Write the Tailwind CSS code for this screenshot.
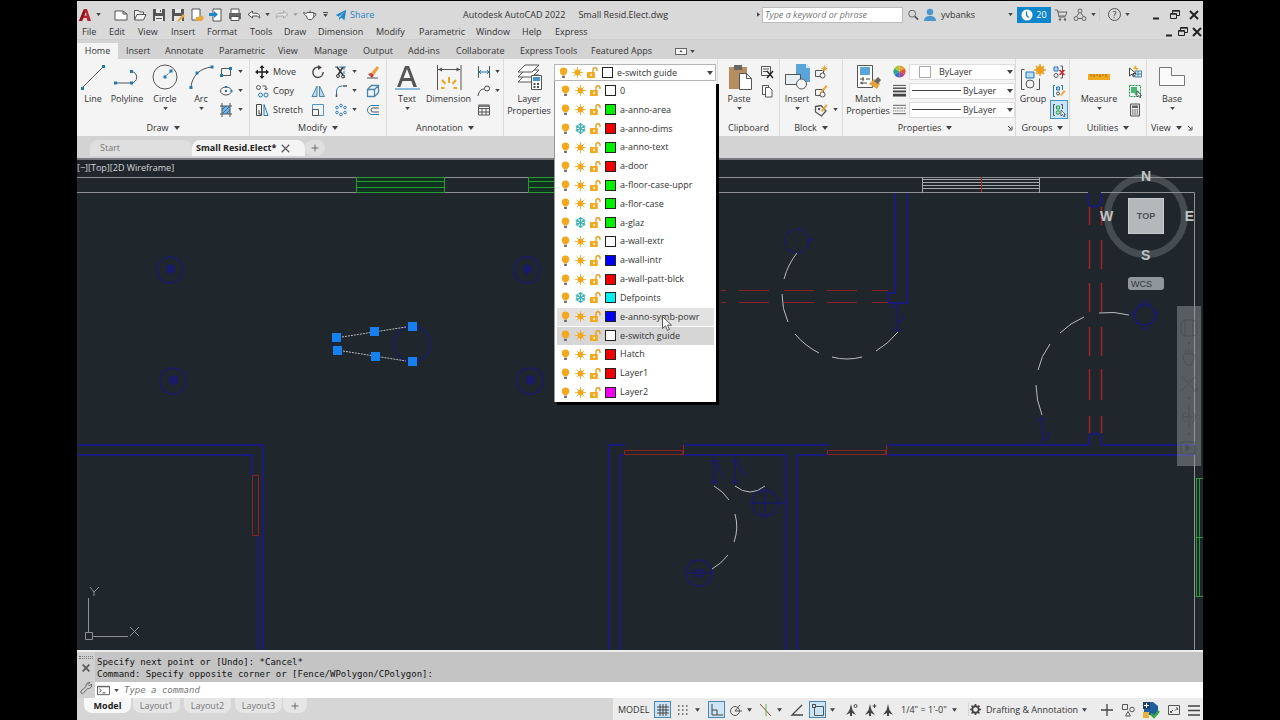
<!DOCTYPE html>
<html lang="en">
<head>
  <meta charset="UTF-8">
  <meta name="viewport" content="width=device-width, initial-scale=1.0">
  <title>Autodesk AutoCAD 2022 - Small Resid.Elect.dwg</title>
  <script src="https://cdn.jsdelivr.net/npm/@tailwindcss/browser@4"></script>
</head>

<body class="bg-black font-['Open_Sans','Noto_Sans',sans-serif] text-[9px] leading-3 text-[#333]">

  <!-- Icon sprite -->
  <svg class="hidden">
    <symbol id="caret" viewBox="0 0 6 4"><path d="M0 0h6L3 4z" fill="#444"/></symbol>
    <symbol id="logo" viewBox="0 0 14 14"><path d="M1 13 6 1h3l4 12h-3.500l-.8-3H5.500L4 13zM6.200 7.500h2.600L7.600 4z" fill="#b8242b"/><path d="M1 13 6 1l1.500 3L4 13z" fill="#8f1219"/></symbol>
    <symbol id="new" viewBox="0 0 14 14"><path d="M1 3h8l4 3v6H1zM9 3v3h4" fill="#fff" stroke="#555"/></symbol>
    <symbol id="open" viewBox="0 0 14 14"><path d="M1.500 12V2.500h4l1 1.500h4v2.500M1.500 12 4 6.500h9L10.500 12z" fill="#f4f4f4" stroke="#555"/></symbol>
    <symbol id="save" viewBox="0 0 14 14"><path d="M1 1h12v12H1z" fill="#555"/><path d="M4 1h6v4H4zM3 8h8v5H3z" fill="#e8e8e8"/><path d="M8 2h1v2H8zM4 10h6v1H4z" fill="#555"/></symbol>
    <symbol id="saveas" viewBox="0 0 14 14"><path d="M1 1h12v12H1z" fill="#555"/><path d="M4 1h6v4H4zM3 8h8v5H3z" fill="#e8e8e8"/><path d="M6 13 12 6l2 2-6 5.500z" fill="#e9a63a"/></symbol>
    <symbol id="web" viewBox="0 0 14 14"><path d="M2 1h8v11H2z" fill="#fff" stroke="#555"/><path d="M6 9h4l2 0v4H6z" fill="#e9a63a"/><circle cx="11" cy="10" r="2.500" fill="#e9a63a"/></symbol>
    <symbol id="mobile" viewBox="0 0 14 14"><path d="M4 1h8v12H4z" fill="#fff" stroke="#555"/><path d="M0 5h5V3l4 3.500L5 10V8H0z" fill="#1f86c8"/></symbol>
    <symbol id="print" viewBox="0 0 14 14"><path d="M3 1h8v5H3z" fill="#fff" stroke="#555"/><path d="M1 5h12v6H1z" fill="#666"/><path d="M3 8.500h8v4H3z" fill="#fff" stroke="#555"/></symbol>
    <symbol id="undo" viewBox="0 0 14 14"><path d="M1 6.500 5.500 3v2.200H9c4 0 4 4.500 3.500 5C12 8.500 11 8 9 8H5.500v2z" fill="#f4f4f4" stroke="#555"/></symbol>
    <symbol id="teapot" viewBox="0 0 14 14"><path d="M3.500 4.500h7c1 3 0 6-2 7H5.500c-1-.5-1.500-1.500-2-3.500C2 7.500 1 6 .5 4.500l3 1M7 4V2.500M10.500 5.500c3-1 3.500 1 0 4" fill="#f4f4f4" stroke="#555"/></symbol>
    <symbol id="plane" viewBox="0 0 14 14"><path d="M1 7 13 1l-2 12-4-3-2 3-.5-4z" fill="#1f86c8"/><path d="M4.500 9 11 3 5.500 10z" fill="#d9d9d9"/></symbol>
    <symbol id="search" viewBox="0 0 14 14"><g fill="none" stroke="#555"><circle cx="6" cy="5.500" r="4"/><path d="m9 8.500 4 4" stroke-width="2"/></g></symbol>
    <symbol id="user" viewBox="0 0 14 14"><circle cx="7" cy="4" r="3.200" fill="#4a97cf"/><path d="M1 13c0-4 3-5 6-5s6 1 6 5z" fill="#4a97cf"/></symbol>
    <symbol id="clock" viewBox="0 0 14 14"><circle cx="7" cy="7" r="6.500" fill="#fff"/><path d="M6.500 3v4.500L9 10" fill="none" stroke="#0d86cb" stroke-width="1.500"/></symbol>
    <symbol id="cart" viewBox="0 0 14 14"><path d="M1 2h2.500L5 9h6.500M4 4h9l-1.500 4H5" fill="none" stroke="#666"/><circle cx="6" cy="11.500" r="1.200" fill="#666"/><circle cx="11" cy="11.500" r="1.200" fill="#666"/></symbol>
    <symbol id="network" viewBox="0 0 14 14"><g fill="none" stroke="#666"><circle cx="7" cy="3" r="2"/><circle cx="3" cy="10.500" r="2"/><circle cx="11" cy="10.500" r="2"/><path d="M6 5 3.500 8.500M8 5l2.500 3.500M5 10.500h4"/></g></symbol>
    <symbol id="restore" viewBox="0 0 12 12"><path d="M3.500 4V1.500h7v5H8M1.500 4.500h6v5h-6z" fill="none" stroke="#222"/><path d="M3.500 2.200h7M1.500 5.200h6" stroke="#222"/></symbol>
    <symbol id="close" viewBox="0 0 12 12"><path d="m2 2 8 8M10 2l-8 8" stroke="#222" stroke-width="2"/></symbol>
    <symbol id="min" viewBox="0 0 12 12"><path d="M3 9.500h6" stroke="#222" stroke-width="2"/></symbol>

    <symbol id="line" viewBox="0 0 26 26"><path d="M2 24 24 2" stroke="#555"/><path d="M1 23h3v3H1zM22 1h3v3h-3z" fill="#1f78b8"/></symbol>
    <symbol id="polyline" viewBox="0 0 26 26"><path d="M2 19h15a5.500 5.500 0 0 0 0-11.500" fill="none" stroke="#555"/><path d="M0 17.500h3v3H0zM16 17.500h3v3h-3zM16 6h3v3h-3z" fill="#1f78b8"/></symbol>
    <symbol id="circle" viewBox="0 0 26 26"><circle cx="13" cy="13" r="12" fill="none" stroke="#555"/><path d="m13 13 6-6" stroke="#1f78b8" stroke-dasharray="2 1"/><path d="M11.500 11.500h3v3h-3zM17.500 5.500h3v3h-3z" fill="#1f78b8"/></symbol>
    <symbol id="arc" viewBox="0 0 26 26"><path d="M3 23C4 12 12 4 24 3" fill="none" stroke="#555"/><path d="M1.500 22h3v3h-3zM7.500 7.500h3v3h-3zM22.500 1.500h3v3h-3z" fill="#1f78b8"/></symbol>
    <symbol id="rect" viewBox="0 0 14 14"><path d="M2.500 3.500h9v7h-9z" fill="none" stroke="#555"/><path d="M1 9h3v3H1zM10 2h3v3h-3z" fill="#1f78b8"/></symbol>
    <symbol id="ellipse" viewBox="0 0 14 14"><ellipse cx="7" cy="7" rx="5.500" ry="4" fill="none" stroke="#555"/><path d="M6 6h2v2H6zM6 2h2v2H6zM11.500 6h2v2h-2z" fill="#1f78b8"/></symbol>
    <symbol id="hatch" viewBox="0 0 14 14"><path d="M3 3h8v8H3z" fill="#7ab4dc"/><path d="M3 0v14M11 0v14M1 3h12M1 11h12" stroke="#555"/><path d="m3 7 4-4M3 11l8-8M7 11l4-4" stroke="#1f78b8"/></symbol>
    <symbol id="move" viewBox="0 0 14 14"><path d="M7 2v10M2 7h10" stroke="#222" stroke-width="1.500"/><path d="m7 0 2.500 3h-5zM7 14l2.500-3h-5zM0 7l3-2.500v5zM14 7l-3-2.500v5z" fill="#222"/></symbol>
    <symbol id="copy" viewBox="0 0 14 14"><g fill="none" stroke="#555"><circle cx="3.500" cy="3.500" r="2"/><path d="M7.500 2H11v4M9.500 4.500 11 6l1.500-1.500"/></g><g fill="none" stroke="#1f78b8"><circle cx="5.500" cy="11" r="2"/><circle cx="11" cy="11" r="2"/></g></symbol>
    <symbol id="stretch" viewBox="0 0 14 14"><path d="M1.500 1.500h5v11h-5zM4 7v4h3" fill="none" stroke="#444"/><path d="M9 1.500 13 12.500H9z" fill="none" stroke="#1f78b8"/></symbol>
    <symbol id="rotate" viewBox="0 0 14 14"><path d="M8 2.200A5.200 5.200 0 1 0 12.200 7" fill="none" stroke="#444" stroke-width="1.300"/><path d="M7 0v5l4-2.500z" fill="#444"/></symbol>
    <symbol id="trim" viewBox="0 0 14 14"><path d="M1 2h12M10 2v11" stroke="#1f78b8" stroke-dasharray="3 1"/><path d="m3 2 6 8M9 2 4 10" stroke="#333" stroke-width="1.500"/><circle cx="4" cy="11" r="1.500" fill="none" stroke="#333"/><circle cx="9" cy="11.500" r="1.500" fill="none" stroke="#333"/></symbol>
    <symbol id="erase" viewBox="0 0 14 14"><path d="m5 8 6-7 2 2-5 7z" fill="#eda53a"/><path d="m2 9 3-1 3 2-2 3z" fill="#cf3b2f"/><path d="M1 13h11" stroke="#555"/></symbol>
    <symbol id="mirror" viewBox="0 0 14 14"><path d="M6 2v10.500H1zM8.500 2v10.500h5z" fill="#b8dcf2" stroke="#4a86ad"/></symbol>
    <symbol id="fillet" viewBox="0 0 14 14"><path d="M2.500 13V8c0-4 2-6 6-6" fill="none" stroke="#1f78b8"/><path d="M2.500 13v-3M9 2h4" stroke="#555" stroke-width="1.500"/></symbol>
    <symbol id="cube" viewBox="0 0 14 14"><path d="M1.500 5.500h7v7h-7zM1.500 5.500l4-4h7v7l-4 4M8.500 5.500l4-4" fill="none" stroke="#4a86ad" stroke-width="1.300"/></symbol>
    <symbol id="scale" viewBox="0 0 14 14"><path d="M1.500 1.500h11v11h-11z" fill="none" stroke="#4a97cf"/><path d="M1.500 6.500h6v6h-6z" fill="none" stroke="#555"/></symbol>
    <symbol id="array" viewBox="0 0 14 14"><g fill="none" stroke="#2d7eb8"><circle cx="7" cy="2.500" r="1.300"/><circle cx="11" cy="4.500" r="1.300"/><circle cx="11" cy="9.500" r="1.300"/><circle cx="7" cy="11.500" r="1.300"/><circle cx="3" cy="9.500" r="1.300"/><circle cx="3" cy="4.500" r="1.300"/></g></symbol>
    <symbol id="offset" viewBox="0 0 14 14"><path d="M13 2.500H6a4.500 4.500 0 0 0 0 9h7" fill="none" stroke="#2d7eb8"/><path d="M13 5H7a2 2 0 0 0 0 4h6" fill="none" stroke="#555"/></symbol>
    <symbol id="text" viewBox="0 0 26 26"><path d="M3 23 11 2h4l8 21h-3.500l-2.200-6H8.500l-2.200 6zM9.500 14h7L13 5z" fill="#555"/><path d="M1 25h25" stroke="#1f86c8"/></symbol>
    <symbol id="dimension" viewBox="0 0 26 26"><path d="M1.500 1v25M25 1v25M2 5.500h22" stroke="#555"/><path d="m2 5.500 4-2v4zM24.500 5.500l-4-2v4z" fill="#555"/><path d="m13 19 0-6M9.500 20 6 16M16.500 20l3.500-4M8.500 24H5M17.500 24H21" stroke="#eda81e" stroke-width="2"/></symbol>
    <symbol id="linear" viewBox="0 0 14 14"><path d="M1.500 1v12M12.500 1v12" stroke="#555"/><path d="M2 7h10M4 5 2 7l2 2M10 5l2 2-2 2" fill="none" stroke="#1f78b8"/></symbol>
    <symbol id="leader" viewBox="0 0 14 14"><path d="M1 12c1-5 3-7 6-7" fill="none" stroke="#444"/><circle cx="10" cy="4.500" r="2.500" fill="none" stroke="#444"/></symbol>
    <symbol id="table" viewBox="0 0 14 14"><path d="M1.500 2h11v10h-11zM1.500 5.500h11M1.500 9h11M5 5v7M9 5v7" fill="none" stroke="#555"/><path d="M1 2h12v2H1z" fill="#777"/></symbol>
    <symbol id="layers" viewBox="0 0 26 26"><g fill="#fff" stroke="#555"><path d="M2 18 9 11h14l-7 7z"/><path d="M2 13 9 6h14l-7 7z"/><path d="M2 8 9 1h14l-7 7z"/></g><path d="M15.500 11.500h10v14h-10z" fill="#fff" stroke="#555"/><path d="M17 13h7v4h-7z" fill="#4a97cf"/><path d="M17.500 19h2v2h-2zM21 19h2v2h-2zM17.500 22h2v2h-2zM21 22h2v2h-2z" fill="#555"/></symbol>
    <symbol id="bulb" viewBox="0 0 12 12"><circle cx="6" cy="4.500" r="4" fill="#f5a81c"/><path d="M4 7h4v2H4z" fill="#f5a81c"/><path d="M4.500 9.500h3V12h-3z" fill="#6d6d6d"/></symbol>
    <symbol id="sun" viewBox="0 0 12 12"><circle cx="6" cy="6" r="3.200" fill="#f5a81c"/><path d="M6 0v12M0 6h12M1.800 1.800l8.400 8.400M10.200 1.800l-8.400 8.400" stroke="#f5a81c" stroke-width=".9"/></symbol>
    <symbol id="snow" viewBox="0 0 12 12"><path d="M6 0v12M.8 3l10.400 6M11.200 3 .8 9M4 1l2 2 2-2M4 11l2-2 2 2M1 5.500 3.500 4.500 3 2M11 5.500 8.500 4.500 9 2M1 6.500l2.500 1L3 10M11 6.500l-2.500 1L9 10" fill="none" stroke="#3fb0b5" stroke-width="1.300"/></symbol>
    <symbol id="lock" viewBox="0 0 12 12"><path d="M0 5.500h8.500V12H0z" fill="#f5a81c"/><path d="M6.500 6V3a2.200 2.200 0 0 1 4.400 0v1.500" fill="none" stroke="#e89a14" stroke-width="1.400"/><path d="M3.500 7.500h2v2.500h-2z" fill="#fff3d6"/></symbol>
    <symbol id="paste" viewBox="0 0 26 26"><path d="M3 3h18v22H3z" fill="#b58d5e"/><path d="M8 1h8v5H8z" fill="#666"/><path d="M13.500 9.500h7l5 5v11h-12zM20.500 9.500v5h5" fill="#fff" stroke="#555"/></symbol>
    <symbol id="cut" viewBox="0 0 14 14"><path d="M1.500 1.500h9v9h-9zM3 4h6M3 6.500h4" fill="none" stroke="#555"/><path d="m7 6 6 7M13 6l-6 7" stroke="#222" stroke-width="1.400"/></symbol>
    <symbol id="copyclip" viewBox="0 0 14 14"><path d="M2.500 1.500h6v9h-6z" fill="#fff" stroke="#555"/><path d="M5.500 3.500h4l2.500 2.500v7H5.500z" fill="#fff" stroke="#555"/></symbol>
    <symbol id="insert" viewBox="0 0 26 26"><path d="M12 0h10l4 4v14H12z" fill="#5aa6da"/><path d="M22 0v4h4z" fill="#d5e9f6"/><path d="M1.500 10.500h15v10h-15z" fill="#e9eef1" stroke="#555"/><circle cx="17.500" cy="20" r="5" fill="#f4f4f4" stroke="#555"/></symbol>
    <symbol id="block" viewBox="0 0 14 14"><path d="M1.500 5.500h8v6h-8z" fill="none" stroke="#555"/><circle cx="8.500" cy="10.500" r="2.500" fill="#f4f4f4" stroke="#555"/><path d="M10.500.5v6M7.500 3.500h6M8.500 1.500l4 4M12.500 1.500l-4 4" stroke="#eda53a"/></symbol>
    <symbol id="blockedit" viewBox="0 0 14 14"><path d="M1.500 5.500h8v6h-8z" fill="none" stroke="#555"/><circle cx="8.500" cy="10.500" r="2.500" fill="#f4f4f4" stroke="#555"/><path d="m6 8 6-7 1.500 1.500L7.500 9z" fill="#eda53a"/></symbol>
    <symbol id="tag" viewBox="0 0 14 14"><path d="M1.500 3.500 7 2.500l5 5.500-4.500 5-6-4z" fill="none" stroke="#555" stroke-width="1.300"/><circle cx="5" cy="6" r="1.200" fill="#555"/><path d="m7 8 5-7 1.500 1.500L8.500 9z" fill="#eda53a"/></symbol>
    <symbol id="match" viewBox="0 0 26 26"><path d="M2.500 1.500h15v22h-15z" fill="#fff" stroke="#555"/><path d="M5 3h10v8H5z" fill="#5aa6da"/><path d="M5 15h4M11 15h4M5 19h7M8 13v4M7 17.500v3" stroke="#444"/><path d="m14 20 5-5 6 5-3 5z" fill="#e7a23a"/><path d="m19 17 4-4 3 3-3 4z" fill="#666"/></symbol>
    <symbol id="wheel" viewBox="0 0 14 14"><path d="M7 7V.5A6.500 6.500 0 0 1 12.600 3.700z" fill="#f0a030"/><path d="m7 7 5.600-3.300A6.500 6.500 0 0 1 12.600 10.300z" fill="#e3532f"/><path d="m7 7 5.600 3.300A6.500 6.500 0 0 1 7 13.500z" fill="#b0449a"/><path d="M7 7v6.500A6.500 6.500 0 0 1 1.400 10.300z" fill="#3a6fc4"/><path d="m7 7-5.600 3.300A6.500 6.500 0 0 1 1.400 3.700z" fill="#2ba884"/><path d="M7 7 1.400 3.700A6.500 6.500 0 0 1 7 .5z" fill="#a8c63a"/></symbol>
    <symbol id="weight" viewBox="0 0 14 14"><path d="M0 1.500h14" stroke="#444"/><path d="M0 4.500h14" stroke="#444" stroke-width="1.500"/><path d="M0 8h14" stroke="#444" stroke-width="2"/><path d="M0 12h14" stroke="#444" stroke-width="3"/></symbol>
    <symbol id="ltype" viewBox="0 0 14 14"><path d="M0 2.500h14M0 11.500h14" stroke="#555"/><path d="M0 5.500h14" stroke="#555" stroke-dasharray="3 1"/><path d="M0 8.500h14" stroke="#555" stroke-dasharray="1 1"/></symbol>
    <symbol id="group" viewBox="0 0 26 26"><path d="M4.500 5.500h-3v20h3M16.500 25.500h3v-11" fill="none" stroke="#555"/><path d="M6 8h8v6H6z" fill="#b8dcf2" stroke="#1f78b8"/><circle cx="10" cy="20" r="4" fill="none" stroke="#555"/><circle cx="20" cy="6" r="4" fill="#eda01e"/><path d="M20 0v12M14 6h12M16 2l8 8M24 2l-8 8" stroke="#eda01e" stroke-width="1.500"/></symbol>
    <symbol id="ungroup" viewBox="0 0 14 14"><path d="M2 2h4v4H2z" fill="#b8dcf2" stroke="#1f78b8"/><circle cx="4" cy="10.500" r="2" fill="none" stroke="#555"/><path d="M8.500 1h2v12h-2" fill="none" stroke="#555"/><path d="m7.500 5 5 5M12.500 5l-5 5" stroke="#d8232a" stroke-width="1.500"/></symbol>
    <symbol id="groupedit" viewBox="0 0 14 14"><path d="M3 1.500H1.500v11H3M9 1.500h1.500V6" fill="none" stroke="#1f78b8"/><path d="M4.500 3h3v3h-3z" fill="#b8dcf2" stroke="#1f78b8"/><circle cx="6" cy="9.500" r="1.500" fill="none" stroke="#555"/><path d="m8 11 4-5 1.500 1.500-4 4.500z" fill="#eda53a"/></symbol>
    <symbol id="groupsel" viewBox="0 0 14 14"><path d="M3 1.500H1.500v11H3M9 1.500h1.500V6" fill="none" stroke="#555"/><path d="M4.500 3h3v3h-3z" fill="#b9e8c8" stroke="#1f9a4c"/><circle cx="6" cy="9.500" r="1.800" fill="#b9e8c8" stroke="#1f9a4c"/><path d="M9 7v6l1.500-1.500L12 14l1-.5-1-2h1.500z" fill="#fff" stroke="#333" stroke-width=".7"/></symbol>
    <symbol id="ruler" viewBox="0 0 26 26"><path d="M2 10h22v6H2z" fill="#f0a81e"/><path d="M5 10v2M8 10v3M11 10v2M14 10v3M17 10v2M20 10v3" stroke="#9a6a10"/></symbol>
    <symbol id="qselect" viewBox="0 0 14 14"><path d="M7 6h6.500v6H7zM7 9h6.500M10 6v6" fill="#d5e9f6" stroke="#4a86ad"/><path d="M1.500 3v8L4 9l1.500 3 1-.5L5 8.500h3z" fill="#fff" stroke="#444"/><path d="M8 0 5 4h3L6 7l5-4H8.500z" fill="#f0a81e"/></symbol>
    <symbol id="selall" viewBox="0 0 14 14"><path d="M1.500 1.500h11v11h-11z" fill="none" stroke="#1f9a4c" stroke-dasharray="2 1"/><path d="M3 3h6v6H3z" fill="#49b874"/><circle cx="9" cy="9" r="2.500" fill="#49b874"/><path d="M9 7v6l1.500-1.500L12 14l1-.5-1-2h1.500z" fill="#fff" stroke="#333" stroke-width=".7"/></symbol>
    <symbol id="calc" viewBox="0 0 14 14"><path d="M2.500 1h9v12h-9z" fill="#e8e8e8" stroke="#555"/><path d="M4 2.500h6V5H4z" fill="#666"/><path d="M4 7h6M4 9h6M4 11h6" stroke="#555" stroke-dasharray="1.500 .8"/></symbol>
    <symbol id="base" viewBox="0 0 26 26"><path d="M.5 3.500h12v8h13v10H.5z" fill="#fafafa" stroke="#777"/></symbol>
    <symbol id="launcher" viewBox="0 0 6 6"><path d="M1 1l3 3M5 1.500V5H1.500" fill="none" stroke="#444"/></symbol>

    <symbol id="wrench" viewBox="0 0 14 14"><path d="m2 10 5-4.500C6.500 3 8.500 1 11 1.500L9 3.500 10.500 5l2-2C13.500 6 11 8 8.500 7.500L4 12.500C3 13.500 1 11.500 2 10z" fill="none" stroke="#666"/></symbol>
    <symbol id="prompt" viewBox="0 0 14 14"><path d="M.5 2.500h13v9H.5z" fill="#fff" stroke="#555"/><path d="M.5 3h13" stroke="#555"/><path d="m2.500 5 2 2-2 2M6 9.500h3" fill="none" stroke="#333"/></symbol>
    <symbol id="grid" viewBox="0 0 14 14"><path d="M4 1v12M7 1v12M10 1v12M1 4h12M1 7h12M1 10h12" stroke="#444"/></symbol>
    <symbol id="dots" viewBox="0 0 14 14"><path d="M2 3h10M2 7h10M2 11h10" stroke="#555" stroke-width="1.500" stroke-dasharray="1.500 2.500"/></symbol>
    <symbol id="ortho" viewBox="0 0 14 14"><path d="M2 1v11h11M2 7h5v5" fill="none" stroke="#444"/></symbol>
    <symbol id="polar" viewBox="0 0 14 14"><circle cx="6" cy="8" r="4.500" fill="none" stroke="#555"/><path d="M6 8h7M6 8l5-6" stroke="#555"/></symbol>
    <symbol id="iso" viewBox="0 0 14 14"><path d="m1 1 11 12" stroke="#8a4a3a"/><path d="M7 1v12" stroke="#6bb04a"/></symbol>
    <symbol id="angle" viewBox="0 0 14 14"><path d="M12 2 2 12h11" fill="none" stroke="#444" stroke-width="1.300"/></symbol>
    <symbol id="osnap" viewBox="0 0 14 14"><path d="M3.500 3.500h9v9h-9z" fill="none" stroke="#555"/><path d="M1.500 1.500h3v3h-3z" fill="#cce4f7" stroke="#444"/></symbol>
    <symbol id="anno" viewBox="0 0 14 14"><path d="M7 1 5.500 7 2 12l4-2v3h2v-3l4 2-3.500-5z" fill="#444"/></symbol>
    <symbol id="gear" viewBox="0 0 14 14"><circle cx="7" cy="7" r="3.500" fill="none" stroke="#444" stroke-width="2"/><path d="M7 1v2.500M7 10.500V13M1 7h2.500M10.500 7H13M2.800 2.800l1.700 1.700M9.500 9.500l1.700 1.700M11.200 2.800 9.500 4.500M4.500 9.500l-1.700 1.700" stroke="#444" stroke-width="1.700"/></symbol>
    <symbol id="plus" viewBox="0 0 14 14"><path d="M7 1v12M1 7h12" stroke="#444" stroke-width="1.300"/></symbol>
    <symbol id="shapes" viewBox="0 0 14 14"><g fill="none" stroke="#555"><path d="M1.500 1.500h5v5h-5zM7 8.500 9.500 13h-5z"/><circle cx="11" cy="6.500" r="2.300"/></g></symbol>
    <symbol id="graphics" viewBox="0 0 18 18"><path d="M2 1h9l5 4v9H2z" fill="#1f5f9e"/><path d="M1 1h7v7H1z" fill="#1a3f6c"/><path d="M4.500 2v5M2 4.500h5" stroke="#fff"/><path d="M1 11h6v6H1z" fill="#e9b13a"/><path d="m9 13 3 3 5-6" fill="none" stroke="#3aa843" stroke-width="2.500"/></symbol>
    <symbol id="clean" viewBox="0 0 14 14"><path d="M1.500 2.500h11v9h-11zM9 5h1.500v2M3.500 8v1.500H5M10 5.500 8 7.500M4 9l2-2" fill="none" stroke="#555"/></symbol>
    <symbol id="menu" viewBox="0 0 14 14"><path d="M1 3h12M1 7.500h12M1 12h12" stroke="#444" stroke-width="1.300"/></symbol>
  </svg>

  <div class="mx-[77px] flex min-h-screen flex-col bg-[#d6d6d6]">

    <!-- Title bar -->
    <header class="flex h-6 items-center border-t border-black bg-[#d9d9d9] pt-1">
      <div class="flex w-[386px] items-center">
        <button class="flex w-[34px] items-center gap-1 pl-px" aria-label="Application menu"><svg class="size-[14px]"><use href="#logo"/></svg><svg class="h-[3px] w-[5px]"><use href="#caret"/></svg></button>
        <button class="flex w-[19px] justify-center" aria-label="New"><svg class="size-[14px]"><use href="#new"/></svg></button>
        <button class="flex w-[19px] justify-center" aria-label="Open"><svg class="size-[14px]"><use href="#open"/></svg></button>
        <button class="flex w-[19px] justify-center" aria-label="Save"><svg class="size-[14px]"><use href="#save"/></svg></button>
        <button class="flex w-[19px] justify-center" aria-label="Save as"><svg class="size-[14px]"><use href="#saveas"/></svg></button>
        <button class="flex w-[19px] justify-center" aria-label="Open from web"><svg class="size-[14px]"><use href="#web"/></svg></button>
        <button class="flex w-[19px] justify-center" aria-label="Save to web"><svg class="size-[14px]"><use href="#mobile"/></svg></button>
        <button class="flex w-[19px] justify-center" aria-label="Plot"><svg class="size-[14px]"><use href="#print"/></svg></button>
        <button class="flex w-7 items-center gap-1 pl-[3px]" aria-label="Undo"><svg class="size-[14px]"><use href="#undo"/></svg><svg class="h-[3px] w-[5px]"><use href="#caret"/></svg></button>
        <button class="flex w-7 items-center gap-1 pl-[3px] opacity-35" aria-label="Redo"><svg class="size-[14px] -scale-x-100"><use href="#undo"/></svg><svg class="h-[3px] w-[5px]"><use href="#caret"/></svg></button>
        <button class="flex w-[19px] justify-center" aria-label="Render"><svg class="size-[14px]"><use href="#teapot"/></svg></button>
        <button class="flex w-3 flex-col items-center gap-px" aria-label="Customize"><span class="h-px w-[5px] bg-[#444]"></span><svg class="h-[3px] w-[5px]"><use href="#caret"/></svg></button>
        <button class="ml-1 flex items-center gap-[3px] text-[#1f86c8]"><svg class="size-3"><use href="#plane"/></svg>Share</button>
      </div>
      <h1 class="flex flex-1 gap-[13px]"><span>Autodesk AutoCAD 2022</span><span>Small Resid.Elect.dwg</span></h1>
      <div class="flex w-[447px] items-center">
        <svg class="h-[3px] w-[5px] -rotate-90"><use href="#caret"/></svg>
        <input type="text" aria-label="Search help" placeholder="Type a keyword or phrase" class="ml-px h-4 w-[141px] border border-[#bbb] bg-white px-[2px] italic placeholder:text-[#777]">
        <button class="flex w-5 justify-center" aria-label="Search"><svg class="size-3"><use href="#search"/></svg></button>
        <button class="flex flex-1 items-center gap-1"><svg class="size-[14px]"><use href="#user"/></svg>yvbanks<svg class="mr-1 ml-auto h-[3px] w-[5px]"><use href="#caret"/></svg></button>
        <button class="flex h-4 w-[34px] items-center justify-center gap-[3px] bg-[#0d86cb] text-white"><svg class="size-3"><use href="#clock"/></svg>20</button>
        <button class="flex w-5 justify-center" aria-label="App store"><svg class="size-[14px]"><use href="#cart"/></svg></button>
        <button class="flex w-7 items-center gap-1 pl-[2px]" aria-label="Connect"><svg class="size-[14px]"><use href="#network"/></svg><svg class="h-[3px] w-[5px]"><use href="#caret"/></svg></button>
        <button class="flex w-[34px] items-center gap-1 border-l border-[#ccc] pl-2" aria-label="Help"><span class="flex size-[13px] items-center justify-center rounded-full border border-[#555]">?</span><svg class="h-[3px] w-[5px]"><use href="#caret"/></svg></button>
        <button class="ml-[14px] flex w-[18px] justify-center" aria-label="Minimize"><svg class="size-3"><use href="#min"/></svg></button>
        <button class="flex w-5 justify-center" aria-label="Restore"><svg class="size-3"><use href="#restore"/></svg></button>
        <button class="flex w-[18px] justify-center" aria-label="Close"><svg class="size-3"><use href="#close"/></svg></button>
      </div>
    </header>

    <!-- Menu bar -->
    <nav class="flex h-4 items-center border-b border-[#cdcdcd] bg-[#d9d9d9] pl-[5px]">
      <div class="grid grid-cols-[27px_29px_33px_36px_43px_34px_34px_58px_43px_57px_46px_33px_32px]">
        <a href="#">File</a><a href="#">Edit</a><a href="#">View</a><a href="#">Insert</a><a href="#">Format</a><a href="#">Tools</a><a href="#">Draw</a><a href="#">Dimension</a><a href="#">Modify</a><a href="#">Parametric</a><a href="#">Window</a><a href="#">Help</a><a href="#">Express</a>
      </div>
      <div class="ml-auto flex gap-[2px]">
        <button aria-label="Minimize drawing"><svg class="size-3"><use href="#min"/></svg></button>
        <button aria-label="Restore drawing"><svg class="size-3"><use href="#restore"/></svg></button>
        <button aria-label="Close drawing"><svg class="size-3"><use href="#close"/></svg></button>
      </div>
    </nav>

    <!-- Ribbon tabs -->
    <nav class="flex h-[19px] items-end bg-[#d3d3d3]">
      <a href="#" class="flex h-4 w-[41px] items-center justify-center bg-[#f4f4f4]">Home</a>
      <div class="grid h-4 grid-cols-[39px_54px_59px_36px_49px_45px_48px_64px_71px_84px] items-center pl-2">
        <a href="#">Insert</a><a href="#">Annotate</a><a href="#">Parametric</a><a href="#">View</a><a href="#">Manage</a><a href="#">Output</a><a href="#">Add-ins</a><a href="#">Collaborate</a><a href="#">Express Tools</a><a href="#">Featured Apps</a>
      </div>
      <button class="flex h-4 items-center gap-[3px]" aria-label="Minimize ribbon"><span class="flex h-[7px] w-3 items-center justify-center border border-[#666] bg-[#f4f4f4]"><svg class="h-[2px] w-1 rotate-180"><use href="#caret"/></svg></span><svg class="h-[3px] w-[5px]"><use href="#caret"/></svg></button>
    </nav>

    <!-- Ribbon -->
    <section class="flex h-[77px] bg-[#f4f4f4] text-center">

      <div class="flex w-[173px] flex-col border-r border-[#dcdcdc] pt-[3px]">
        <div class="flex h-[57px]">
          <button class="flex w-8 flex-col items-center"><svg class="mt-[2px] mb-[3px] size-[26px]"><use href="#line"/></svg>Line</button>
          <button class="flex w-9 flex-col items-center"><svg class="mt-[2px] mb-[3px] size-[26px]"><use href="#polyline"/></svg>Polyline</button>
          <button class="flex w-10 flex-col items-center"><svg class="mt-[2px] mb-[3px] size-[26px]"><use href="#circle"/></svg>Circle<svg class="mt-[2px] h-[3px] w-[5px]"><use href="#caret"/></svg></button>
          <button class="flex w-8 flex-col items-center"><svg class="mt-[2px] mb-[3px] size-[26px]"><use href="#arc"/></svg>Arc<svg class="mt-[2px] h-[3px] w-[5px]"><use href="#caret"/></svg></button>
          <div class="grid grid-rows-3 pl-[2px]">
            <button class="flex items-center gap-[5px]" aria-label="Rectangle"><svg class="size-[14px]"><use href="#rect"/></svg><svg class="h-[3px] w-[5px]"><use href="#caret"/></svg></button>
            <button class="flex items-center gap-[5px]" aria-label="Ellipse"><svg class="size-[14px]"><use href="#ellipse"/></svg><svg class="h-[3px] w-[5px]"><use href="#caret"/></svg></button>
            <button class="flex items-center gap-[5px]" aria-label="Hatch"><svg class="size-[14px]"><use href="#hatch"/></svg><svg class="h-[3px] w-[5px]"><use href="#caret"/></svg></button>
          </div>
        </div>
        <button class="flex flex-1 items-center justify-center gap-[5px]">Draw<svg class="h-1 w-[6px]"><use href="#caret"/></svg></button>
      </div>

      <div class="flex w-[137px] flex-col border-r border-[#dcdcdc] pt-[3px]">
        <div class="grid h-[57px] grid-cols-[56px_23px_32px_20px] grid-rows-3 pl-[5px]">
          <button class="flex items-center gap-1"><svg class="size-[14px]"><use href="#move"/></svg>Move</button>
          <button class="flex items-center" aria-label="Rotate"><svg class="size-[14px]"><use href="#rotate"/></svg></button>
          <button class="flex items-center gap-1" aria-label="Trim"><svg class="size-[14px]"><use href="#trim"/></svg><svg class="h-[3px] w-[5px]"><use href="#caret"/></svg></button>
          <button class="flex items-center" aria-label="Erase"><svg class="size-[14px]"><use href="#erase"/></svg></button>
          <button class="flex items-center gap-1"><svg class="size-[14px]"><use href="#copy"/></svg>Copy</button>
          <button class="flex items-center" aria-label="Mirror"><svg class="size-[14px]"><use href="#mirror"/></svg></button>
          <button class="flex items-center gap-1" aria-label="Fillet"><svg class="size-[14px]"><use href="#fillet"/></svg><svg class="h-[3px] w-[5px]"><use href="#caret"/></svg></button>
          <button class="flex items-center" aria-label="Explode"><svg class="size-[14px]"><use href="#cube"/></svg></button>
          <button class="flex items-center gap-1"><svg class="size-[14px]"><use href="#stretch"/></svg>Stretch</button>
          <button class="flex items-center" aria-label="Scale"><svg class="size-[14px]"><use href="#scale"/></svg></button>
          <button class="flex items-center gap-1" aria-label="Array"><svg class="size-[14px]"><use href="#array"/></svg><svg class="h-[3px] w-[5px]"><use href="#caret"/></svg></button>
          <button class="flex items-center" aria-label="Offset"><svg class="size-[14px]"><use href="#offset"/></svg></button>
        </div>
        <button class="flex flex-1 items-center justify-center gap-[5px]">Modify<svg class="h-1 w-[6px]"><use href="#caret"/></svg></button>
      </div>

      <div class="flex w-[117px] flex-col border-r border-[#dcdcdc] pt-[3px]">
        <div class="flex h-[57px] pl-1">
          <button class="flex w-8 flex-col items-center"><svg class="mt-[2px] mb-[3px] size-[26px]"><use href="#text"/></svg>Text<svg class="mt-[2px] h-[3px] w-[5px]"><use href="#caret"/></svg></button>
          <button class="flex w-[51px] flex-col items-center"><svg class="mt-[2px] mb-[3px] size-[26px]"><use href="#dimension"/></svg>Dimension</button>
          <div class="grid grid-rows-3 pl-[3px]">
            <button class="flex items-center gap-1" aria-label="Linear"><svg class="size-[14px]"><use href="#linear"/></svg><svg class="h-[3px] w-[5px]"><use href="#caret"/></svg></button>
            <button class="flex items-center gap-1" aria-label="Leader"><svg class="size-[14px]"><use href="#leader"/></svg><svg class="h-[3px] w-[5px]"><use href="#caret"/></svg></button>
            <button class="flex items-center" aria-label="Table"><svg class="size-[14px]"><use href="#table"/></svg></button>
          </div>
        </div>
        <button class="flex flex-1 items-center justify-center gap-[5px]">Annotation<svg class="h-1 w-[6px]"><use href="#caret"/></svg></button>
      </div>

      <!-- Layers panel with its open layer list -->
      <div class="flex w-[214px] border-r border-[#dcdcdc] pt-[3px]">
        <button class="flex w-[50px] flex-col items-center"><svg class="mt-[2px] mb-[3px] size-[26px]"><use href="#layers"/></svg>Layer Properties</button>
        <div class="relative mt-[2px] h-[17px] w-[162px]">
          <button id="layerCombo" aria-haspopup="listbox" aria-expanded="true" class="flex h-full w-full items-center border border-[#b5b5b5] bg-white pr-[2px] pl-[3px]">
            <svg class="mr-[3px] size-[11px]"><use href="#bulb"/></svg>
            <svg class="mr-1 size-[11px]"><use href="#sun"/></svg>
            <svg class="mr-1 size-[11px]"><use href="#lock"/></svg>
            <span class="mr-1 size-[11px] border border-[#222] bg-white"></span>
            e-switch guide
            <svg class="ml-auto h-1 w-[6px]"><use href="#caret"/></svg>
          </button>
          <ul id="layerList" role="listbox" aria-label="Layers" class="absolute top-full left-0 z-20 grid h-[321px] w-full auto-rows-fr border-l border-[#999] bg-white px-[2px] pt-px text-left shadow-[3px_3px_0_#000]"></ul>
          <svg class="absolute top-[252px] left-[108px] z-30 h-[15px] w-[10px]" viewBox="0 0 10 15"><path d="M.5.500v12l3-2.700 2 4.500 2-.9-2-4.300h4z" fill="#fff" stroke="#555"/></svg>
        </div>
      </div>

      <div class="flex w-[62px] flex-col border-r border-[#dcdcdc] pt-[3px]">
        <div class="flex h-[57px]">
          <button class="flex w-[42px] flex-col items-center"><svg class="mt-[2px] mb-[3px] size-[26px]"><use href="#paste"/></svg>Paste<svg class="mt-[2px] h-[3px] w-[5px]"><use href="#caret"/></svg></button>
          <div class="grid grid-rows-3">
            <button class="flex items-center" aria-label="Cut"><svg class="size-[14px]"><use href="#cut"/></svg></button>
            <button class="flex items-center" aria-label="Copy clip"><svg class="size-[14px]"><use href="#copyclip"/></svg></button>
          </div>
        </div>
        <span class="flex flex-1 items-center justify-center">Clipboard</span>
      </div>

      <div class="flex w-[63px] flex-col border-r border-[#dcdcdc] pt-[3px]">
        <div class="flex h-[57px]">
          <button class="flex w-[34px] flex-col items-center"><svg class="mt-[2px] mb-[3px] size-[26px]"><use href="#insert"/></svg>Insert<svg class="mt-[2px] h-[3px] w-[5px]"><use href="#caret"/></svg></button>
          <div class="grid grid-rows-3">
            <button class="flex items-center" aria-label="Create block"><svg class="size-[14px]"><use href="#block"/></svg></button>
            <button class="flex items-center" aria-label="Edit block"><svg class="size-[14px]"><use href="#blockedit"/></svg></button>
            <button class="flex items-center gap-[5px]" aria-label="Attributes"><svg class="size-[14px]"><use href="#tag"/></svg><svg class="h-[3px] w-[5px]"><use href="#caret"/></svg></button>
          </div>
        </div>
        <button class="flex flex-1 items-center justify-center gap-[5px]">Block<svg class="h-1 w-[6px]"><use href="#caret"/></svg></button>
      </div>

      <div class="flex w-[173px] flex-col border-r border-[#dcdcdc] pt-[3px]">
        <div class="flex h-[57px]">
          <button class="flex w-[50px] flex-col items-center"><svg class="mt-[2px] mb-[3px] size-[26px]"><use href="#match"/></svg>Match Properties</button>
          <div class="grid flex-1 grid-cols-[16px_1fr] grid-rows-3 items-center">
            <svg class="size-[13px]"><use href="#wheel"/></svg>
            <div class="relative">
              <select aria-label="Object color" class="h-4 w-full appearance-none border border-[#ddd] bg-white pl-[29px]"><option>ByLayer</option></select>
              <span class="absolute top-[2px] left-[10px] size-3 border border-[#aaa] bg-white"></span>
              <svg class="absolute top-[6px] right-[2px] h-1 w-[6px]"><use href="#caret"/></svg>
            </div>
            <svg class="size-[13px]"><use href="#weight"/></svg>
            <div class="relative">
              <select aria-label="Lineweight" class="h-4 w-full appearance-none border border-[#ddd] bg-white pl-[53px]"><option>ByLayer</option></select>
              <span class="absolute top-[7px] left-[3px] h-px w-[49px] bg-[#444]"></span>
              <svg class="absolute top-[6px] right-[2px] h-1 w-[6px]"><use href="#caret"/></svg>
            </div>
            <svg class="size-[13px]"><use href="#ltype"/></svg>
            <div class="relative">
              <select aria-label="Linetype" class="h-4 w-full appearance-none border border-[#ddd] bg-white pl-[53px]"><option>ByLayer</option></select>
              <span class="absolute top-[7px] left-[3px] h-px w-[49px] bg-[#444]"></span>
              <svg class="absolute top-[6px] right-[2px] h-1 w-[6px]"><use href="#caret"/></svg>
            </div>
          </div>
        </div>
        <div class="flex flex-1 items-center">
          <button class="flex flex-1 items-center justify-center gap-[5px]">Properties<svg class="h-1 w-[6px]"><use href="#caret"/></svg></button>
          <svg class="mr-[2px] size-[6px]"><use href="#launcher"/></svg>
        </div>
      </div>

      <div class="flex w-[54px] flex-col border-r border-[#dcdcdc] pt-[3px]">
        <div class="flex h-[57px]">
          <button class="flex w-[34px] flex-col items-center"><svg class="mt-[2px] mb-[3px] size-[26px]"><use href="#group"/></svg>Group</button>
          <div class="grid grid-rows-3">
            <button class="flex items-center px-[2px]" aria-label="Ungroup"><svg class="size-[14px]"><use href="#ungroup"/></svg></button>
            <button class="flex items-center px-[2px]" aria-label="Group edit"><svg class="size-[14px]"><use href="#groupedit"/></svg></button>
            <button class="flex items-center border border-[#3c95d1] bg-[#cce4f7] px-px" aria-label="Group selection"><svg class="size-[14px]"><use href="#groupsel"/></svg></button>
          </div>
        </div>
        <button class="flex flex-1 items-center justify-center gap-[5px]">Groups<svg class="h-1 w-[6px]"><use href="#caret"/></svg></button>
      </div>

      <div class="flex w-[77px] flex-col border-r border-[#dcdcdc] pt-[3px]">
        <div class="flex h-[57px]">
          <button class="flex w-[58px] flex-col items-center"><svg class="mt-[2px] mb-[3px] size-[26px]"><use href="#ruler"/></svg>Measure<svg class="mt-[2px] h-[3px] w-[5px]"><use href="#caret"/></svg></button>
          <div class="grid grid-rows-3">
            <button class="flex items-center" aria-label="Quick select"><svg class="size-[14px]"><use href="#qselect"/></svg></button>
            <button class="flex items-center" aria-label="Select all"><svg class="size-[14px]"><use href="#selall"/></svg></button>
            <button class="flex items-center" aria-label="Calculator"><svg class="size-[14px]"><use href="#calc"/></svg></button>
          </div>
        </div>
        <button class="flex flex-1 items-center justify-center gap-[5px]">Utilities<svg class="h-1 w-[6px]"><use href="#caret"/></svg></button>
      </div>

      <div class="flex flex-1 flex-col pt-[3px]">
        <div class="flex h-[57px]">
          <button class="flex w-[50px] flex-col items-center"><svg class="mt-[2px] mb-[3px] size-[26px]"><use href="#base"/></svg>Base<svg class="mt-[2px] h-[3px] w-[5px]"><use href="#caret"/></svg></button>
        </div>
        <button class="flex flex-1 items-center gap-[5px] pl-1">View<svg class="h-1 w-[6px]"><use href="#caret"/></svg><svg class="size-[6px]"><use href="#launcher"/></svg></button>
      </div>
    </section>

    <!-- Drawing tabs -->
    <nav class="flex h-6 items-start border-b-2 border-[#77777c] bg-[#d3d3d3] pt-1">
      <a href="#" class="ml-[13px] flex h-4 w-[102px] items-center rounded-t-lg bg-[#dfdfdf] pl-[10px] text-[#777]">Start</a>
      <a href="#" class="flex h-4 w-[113px] items-center gap-[5px] rounded-t-lg bg-[#f4f4f4] pl-1 font-bold whitespace-nowrap text-[#222]">Small Resid.Elect*<svg class="size-[9px] shrink-0" viewBox="0 0 12 12"><path d="m1 1 10 10M11 1 1 11" stroke="#555" stroke-width="1.500"/></svg></a>
      <button class="flex h-4 w-5 items-center justify-center rounded-lg bg-[#dfdfdf]" aria-label="New drawing"><svg class="size-2"><use href="#plus"/></svg></button>
    </nav>

    <!-- Drawing area -->
    <main class="relative flex-1 bg-[#1f272c]">
      <svg class="absolute inset-0 h-full w-full" viewBox="77 160 1126 490" preserveAspectRatio="xMinYMin slice" fill="none">
        <!-- exterior walls and windows -->
        <path d="M77 177.500H1203M77 192.500H1088M1101 192.500H1194.500V445M1194.500 455V650" stroke="#8d8f92"/>
        <path d="M356.500 177.500h88v15h-88zM528.500 177.500h40v15h-40z" fill="#0f3320" stroke="#2b9a35"/>
        <path d="M357 181.500h88M357 187.500h88M529 181.500h40M529 187.500h40M1195.500 478.500h8M1195.500 596.500h8M1195.500 537.500h8M1196.500 478v118M1199.500 478v118" stroke="#2b9a35"/>
        <path d="M922.500 177v16M1039.500 177v16M922 179.500h117M922 182.500h117M922 185.500h117M922 188.500h117" stroke="#a5a8aa"/>
        <path d="M981.500 177v15" stroke="#b02428"/>

        <!-- interior walls -->
        <g stroke="#1a1b7c" stroke-width="2">
          <path d="M77 445h186V650M77 455h175v20M258 535V650"/>
          <path d="M625 445h-16V650M620 650V455h4M684 445h145M684 455h102V650M797 650V455h30M887 445h202M1101 445h93M887 455h307"/>
          <path d="M895 193v100h-7v10M907 193v110h-19"/>
          <path d="M1088 193v10c3 5 10 5 13 0v-10M1089 445v-8c3-5 9-5 12 0v8"/>
        </g>

        <!-- doors -->
        <g stroke="#8e1f23">
          <path d="M252.500 475.500h6v60h-6zM624.500 450.500h58v4h-58zM683.500 445v10M827.500 450.500h58v4h-58zM886.500 445v10"/>
          <path d="M721 290.500h5M739 290.500h30M784 290.500h30M827 290.500h30M872 290.500h16M721 302.500h5M739 302.500h30M784 302.500h30M827 302.500h30M872 302.500h16"/>
        </g>
        <path d="M1089.500 207v18M1089.500 240v29M1089.500 283v29M1089.500 327v29M1089.500 369v31M1089.500 416v17M1101.500 207v18M1101.500 240v29M1101.500 283v29M1101.500 327v29M1101.500 369v31M1101.500 416v17" stroke="#a02226" stroke-width="1.500"/>

        <!-- electrical symbols -->
        <g stroke="#1a1b6c" stroke-width="1.500">
          <circle cx="170" cy="270" r="13"/><circle cx="527" cy="270" r="13"/><circle cx="173" cy="381" r="13"/><circle cx="530" cy="381" r="13"/>
          <path d="M167 266h7v6h-7zM170 264v12M524 266h7v6h-7zM527 264v12M170 377h7v6h-7zM173 375v12M527 377h7v6h-7zM530 375v12" fill="#1a1b6c"/>
          <circle cx="412" cy="344" r="18"/><path d="M332 343c0 5 3 6 7 6"/>
          <circle cx="797" cy="241" r="12" stroke-dasharray="8 3"/><path d="m807 241 6-2"/>
          <path d="m1145 300 14 15-14 15-14-15z" stroke-dasharray="9 3"/><circle cx="1145" cy="315" r="10"/>
          <path d="M897.500 303v28M893 330h9M889 309c6-6 10-3 8 4M897 323c8-3 8-7 5-8M1042.500 417v28M1036 422c5-6 8-3 6 4M1042 440c8 0 8-6 5-8"/>
          <path d="M714 457v28M711 482h7M735 457v28M731 482h8M710 461h9M731 461h9M716 463l8 16M737 463l9 14"/>
          <circle cx="765" cy="503" r="13"/><path d="M750 503h36M765 490v28"/><circle cx="699" cy="573" r="13"/><path d="M695 570h8v6h-8zM688 573h26"/>
        </g>

        <!-- switch wiring arcs -->
        <g stroke="#b9bcbe">
          <path d="M797 253q-9 11-13 26M782 294q0 15 6 28M795 334q10 12 24 19M832 357q15 4 30 0M876 351q12-7 22-19"/>
          <path d="M1042 415q-6-15-6-30M1038 370q3-14 12-26M1060 333q10-10 24-16M1099 313q15-2 30 2"/>
          <path d="M714 486q9 5 15 14M735 514q4 14-1 28M728 555q-7 9-16 14M735 486q15 12 30 0"/>
          <path d="m342 337 64-10M343 351l63 10" stroke-dasharray="2 1"/>
        </g>
        <path d="M332 333h9v9h-9zM370 327h9v9h-9zM408 322h9v9h-9zM333 346h9v9h-9zM371 352h9v9h-9zM408 357h9v9h-9z" fill="#1681ee"/>

        <!-- UCS icon -->
        <path d="M88.500 598v34M93 636.500h35M85.500 632.500h7v7h-7zM90 587l4 5 5-5M94 592v4M130 627l9 9M139 627l-9 9" stroke="#8b9194"/>
      </svg>

      <span class="absolute top-[2px] left-0 text-[#d5d8da]">[−][Top][2D Wireframe]</span>

      <!-- View cube -->
      <div class="absolute top-[14px] right-[15px] size-[84px] font-['Liberation_Sans',sans-serif] text-sm font-bold text-[#c0c4c6]">
        <div class="absolute inset-0 rounded-full border-[7px] border-[#8c9499]/35"></div>
        <span class="absolute -top-1 left-[37px] leading-3">N</span>
        <span class="absolute top-9 -left-1 leading-3">W</span>
        <span class="absolute top-9 right-[-6px] leading-3">E</span>
        <span class="absolute top-[75px] left-[37px] leading-3">S</span>
        <button class="absolute top-6 left-6 size-9 border border-[#c5cbcd] bg-[#b3b9ba] text-[9px] text-[#4b5255]">TOP</button>
      </div>
      <button class="absolute top-[117px] right-[39px] h-[13px] w-9 rounded-[3px] bg-[#8f969c] pl-[3px] text-left font-['Liberation_Sans',sans-serif] text-[9px] text-[#30383c]">WCS</button>

      <!-- Navigation bar -->
      <div class="absolute top-[146px] right-[2px] flex h-40 w-6 flex-col items-center justify-between bg-[#9aa2a5]/45 py-3">
        <svg class="h-[136px] w-5 opacity-50" viewBox="0 0 20 136" fill="none" stroke="#3f474b"><path d="M5 2h10l3 4v9l-3 3H5l-3-3V6zM6 2v16M14 2v16M7 36v-5M10 36v-6M13 36v-4M5 36h10v6l-3 5H8l-4-6zM2 58l15 15M17 58 2 73M14 73h4v-4M10 88v22M3 99h14M6 94l-3 5 3 5M14 94l3 5-3 5M2 124h14v12H2z"/><path d="m7 127 5 3-5 3z" fill="#3f474b"/><path d="M9 25h2M9 80h2M9 116h2" stroke-width="2"/></svg>
      </div>
    </main>

    <!-- Command line -->
    <section class="flex h-12 border-t-2 border-[#eee] bg-[#c4c4c4] font-['DejaVu_Sans_Mono','Liberation_Mono',monospace] text-[#111]">
      <div class="flex w-[18px] flex-col items-center bg-[#d0d0d0] pt-1">
        <span class="h-[3px] w-[14px] border-y border-dotted border-[#777]"></span>
        <button class="mt-1" aria-label="Close command line"><svg class="size-[10px]" viewBox="0 0 12 12"><path d="m2 2 8 8M10 2l-8 8" stroke="#555" stroke-width="2"/></svg></button>
        <button class="mt-2" aria-label="Customize command line"><svg class="size-[14px]"><use href="#wrench"/></svg></button>
      </div>
      <div class="flex flex-1 flex-col">
        <div class="h-[30px] pt-1 pl-[2px]"><p>Specify next point or [Undo]: *Cancel*</p><p>Command: Specify opposite corner or [Fence/WPolygon/CPolygon]:</p></div>
        <label class="flex flex-1 items-center gap-1 bg-white pl-[2px]">
          <svg class="size-[13px]"><use href="#prompt"/></svg><svg class="h-[3px] w-[5px]"><use href="#caret"/></svg>
          <input type="text" aria-label="Command" placeholder="Type a command" class="h-4 flex-1 pl-px italic outline-none placeholder:text-[#777]">
        </label>
      </div>
    </section>

    <!-- Layout tabs and status bar -->
    <footer class="flex h-[22px] items-start">
      <nav class="flex pl-[7px] text-[#777]">
        <a href="#" class="flex h-[15px] w-[47px] items-center justify-center rounded-b-lg bg-[#f7f7f7] pt-px font-bold text-[#222]">Model</a>
        <a href="#" class="ml-[2px] flex h-[15px] w-[47px] items-center justify-center rounded-b-lg bg-[#e6e6e6] pt-px">Layout1</a>
        <a href="#" class="ml-1 flex h-[15px] w-[47px] items-center justify-center rounded-b-lg bg-[#e6e6e6] pt-px">Layout2</a>
        <a href="#" class="ml-1 flex h-[15px] w-[47px] items-center justify-center rounded-b-lg bg-[#e6e6e6] pt-px">Layout3</a>
        <button class="ml-px flex h-[15px] w-6 items-center justify-center rounded-b-lg bg-[#e6e6e6]" aria-label="New layout"><svg class="size-2"><use href="#plus"/></svg></button>
      </nav>
      <div class="ml-auto flex h-full w-[590px] items-center bg-[#ececec] pt-px pl-[5px]">
        <button class="w-9 text-left">MODEL</button>
        <button class="flex size-[17px] items-center justify-center border border-[#4a86ad] bg-[#cce4f7]" aria-label="Grid"><svg class="size-[14px]"><use href="#grid"/></svg></button>
        <button class="flex w-[37px] items-center gap-[5px] pl-[5px]" aria-label="Snap"><svg class="size-[14px]"><use href="#dots"/></svg><svg class="h-1 w-[5px]"><use href="#caret"/></svg></button>
        <button class="flex size-[17px] items-center justify-center border border-[#4a86ad] bg-[#cce4f7]" aria-label="Ortho"><svg class="size-[14px]"><use href="#ortho"/></svg></button>
        <button class="flex w-[30px] items-center gap-1 pl-1" aria-label="Polar"><svg class="size-[14px]"><use href="#polar"/></svg><svg class="h-1 w-[5px]"><use href="#caret"/></svg></button>
        <button class="flex w-[30px] items-center gap-1 pl-1" aria-label="Isometric"><svg class="size-[14px]"><use href="#iso"/></svg><svg class="h-1 w-[5px]"><use href="#caret"/></svg></button>
        <button class="flex w-[24px] justify-center" aria-label="Object snap tracking"><svg class="size-[14px]"><use href="#angle"/></svg></button>
        <button class="flex size-[17px] items-center justify-center border border-[#4a86ad] bg-[#cce4f7]" aria-label="Object snap"><svg class="size-[14px]"><use href="#osnap"/></svg></button>
        <button class="flex w-[15px] items-center pl-1" aria-label="Snap options"><svg class="h-1 w-[5px]"><use href="#caret"/></svg></button>
        <button class="flex w-[19px] justify-center" aria-label="Annotation visibility"><svg class="size-[14px]" viewBox="0 0 14 14"><use href="#anno"/><circle cx="11.500" cy="3" r="1.500" fill="none" stroke="#444"/></svg></button>
        <button class="flex w-[19px] justify-center" aria-label="Auto scale"><svg class="size-[14px]" viewBox="0 0 14 14"><use href="#anno"/><path d="M11.500 1v4M9.500 3h4" stroke="#444"/></svg></button>
        <button class="flex w-[18px] justify-center" aria-label="Annotation scale"><svg class="size-[14px]"><use href="#anno"/></svg></button>
        <button class="flex w-[71px] items-center gap-[5px] pl-1 whitespace-nowrap">1/4" = 1'-0"<svg class="h-1 w-[5px]"><use href="#caret"/></svg></button>
        <button class="flex flex-1 items-center gap-1 border-l border-[#d5d5d5] whitespace-nowrap"><svg class="size-[13px]"><use href="#gear"/></svg>Drafting &amp; Annotation<svg class="h-1 w-[5px]"><use href="#caret"/></svg></button>
        <button class="flex w-5 justify-center" aria-label="Customize scale"><svg class="size-[14px]"><use href="#plus"/></svg></button>
        <button class="flex w-[21px] justify-center" aria-label="Isolate objects"><svg class="size-[14px]"><use href="#shapes"/></svg></button>
        <button class="flex w-[25px] justify-center" aria-label="Graphics"><svg class="size-[18px]"><use href="#graphics"/></svg></button>
        <button class="flex w-[22px] justify-center" aria-label="Clean screen"><svg class="size-[14px]"><use href="#clean"/></svg></button>
        <button class="flex w-[18px] justify-center" aria-label="Customization"><svg class="size-[14px]"><use href="#menu"/></svg></button>
      </div>
    </footer>
  </div>

  <script>
    // name, color, frozen?
    const layers = [
      ['0', '#ffffff', false],
      ['a-anno-area', '#00f000', false],
      ['a-anno-dims', '#f00000', true],
      ['a-anno-text', '#00f000', false],
      ['a-door', '#f00000', false],
      ['a-floor-case-uppr', '#00f000', false],
      ['a-flor-case', '#00f000', false],
      ['a-glaz', '#00f000', true],
      ['a-wall-extr', '#ffffff', false],
      ['a-wall-intr', '#0000f0', false],
      ['a-wall-patt-blck', '#f00000', false],
      ['Defpoints', '#00f0f0', true],
      ['e-anno-symb-powr', '#0000f0', false],
      ['e-switch guide', '#ffffff', false],
      ['Hatch', '#f00000', false],
      ['Layer1', '#f00000', false],
      ['Layer2', '#f000f0', false],
    ];
    const rowBg = { 'e-anno-symb-powr': 'bg-[#e2e2e2]', 'e-switch guide': 'bg-[#d6d6d6]' };

    document.getElementById('layerList').innerHTML = layers.map(([name, color, frozen]) => `
      <li role="option" aria-selected="${name === 'e-switch guide'}" class="flex items-center border-b border-white pl-[3px] ${rowBg[name] || ''}">
        <svg class="mr-1 size-[11px]"><use href="#bulb"/></svg>
        <svg class="mr-1 size-[11px]"><use href="#${frozen ? 'snow' : 'sun'}"/></svg>
        <svg class="mr-1 size-[11px]"><use href="#lock"/></svg>
        <span class="mr-1 size-[11px] border border-[#222]" style="background:${color}"></span>
        ${name}
      </li>`).join('');
  </script>
</body>
</html>
